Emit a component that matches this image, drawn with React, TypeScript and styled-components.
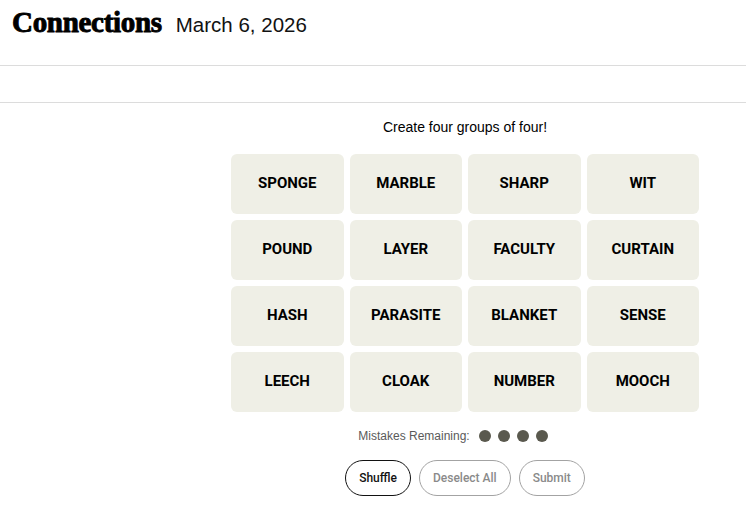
import React from 'react'
import styled, { createGlobalStyle } from 'styled-components'

const GlobalStyle = createGlobalStyle`
  html, body {
    margin: 0;
    padding: 0;
    background: #ffffff;
    font-family: "Liberation Sans", Arial, sans-serif;
    color: #000;
  }
`

const Header = styled.header`
  height: 66px;
  display: flex;
  align-items: flex-start;
  gap: 14px;
  padding: 5px 0 0 12px;
  box-sizing: border-box;
  border-bottom: 1px solid #dcdcdc;
`

const Title = styled.h1`
  margin: 0;
  font-family: "Liberation Serif", "Times New Roman", serif;
  font-weight: 700;
  font-size: 29px;
  line-height: 34px;
  letter-spacing: -0.3px;
  -webkit-text-stroke: 0.9px #000;
`

const DateText = styled.span`
  font-size: 20.5px;
  line-height: 34px;
  padding-top: 3px;
  font-weight: 400;
  color: #121212;
`

const Toolbar = styled.div`
  height: 36px;
  border-bottom: 1px solid #dcdcdc;
`

const Main = styled.main`
  display: flex;
  flex-direction: column;
  align-items: center;
  width: 468px;
  margin-left: 231px;
  padding-top: 14px;
`

const Prompt = styled.p`
  margin: 0 0 17px;
  font-size: 14px;
  line-height: 20px;
`

const Board = styled.div`
  display: grid;
  grid-template-columns: repeat(4, 112.5px);
  grid-auto-rows: 60px;
  gap: 6px;
`

const Tile = styled.button`
  border: none;
  border-radius: 6px;
  background: #efefe6;
  font-family: Roboto, "Liberation Sans", Arial, sans-serif;
  font-weight: 700;
  font-size: 15px;
  color: #000;
  text-transform: uppercase;
  padding: 0 0 2px;
`

const Mistakes = styled.div`
  display: flex;
  align-items: center;
  gap: 9px;
  margin: 17px 0 0 -24px;
  font-size: 12px;
  color: #5a5a5a;
`

const Dots = styled.div`
  display: flex;
  gap: 7px;
`

const Dot = styled.span`
  width: 12px;
  height: 12px;
  border-radius: 50%;
  background: #5a594e;
`

const Actions = styled.div`
  display: flex;
  gap: 8px;
  margin-top: 17px;
`

const Pill = styled.button<{ $active?: boolean }>`
  height: 36px;
  padding: 0 13px;
  border-radius: 18px;
  background: #fff;
  border: 1px solid ${(p) => (p.$active ? '#121212' : '#a3a3a3')};
  color: ${(p) => (p.$active ? '#121212' : '#8a8a8a')};
  font-family: Roboto, "Liberation Sans", Arial, sans-serif;
  font-weight: 500;
  font-size: 12px;
`

const words = [
  'Sponge', 'Marble', 'Sharp', 'Wit',
  'Pound', 'Layer', 'Faculty', 'Curtain',
  'Hash', 'Parasite', 'Blanket', 'Sense',
  'Leech', 'Cloak', 'Number', 'Mooch',
]

const App = () => (
  <>
    <GlobalStyle />
    <Header>
      <Title>Connections</Title>
      <DateText>March 6, 2026</DateText>
    </Header>
    <Toolbar />
    <Main>
      <Prompt>Create four groups of four!</Prompt>
      <Board>
        {words.map((w) => (
          <Tile key={w}>{w}</Tile>
        ))}
      </Board>
      <Mistakes>
        Mistakes Remaining:
        <Dots>
          {[0, 1, 2, 3].map((i) => (
            <Dot key={i} />
          ))}
        </Dots>
      </Mistakes>
      <Actions>
        <Pill $active>Shuffle</Pill>
        <Pill>Deselect All</Pill>
        <Pill>Submit</Pill>
      </Actions>
    </Main>
  </>
)

export default App
